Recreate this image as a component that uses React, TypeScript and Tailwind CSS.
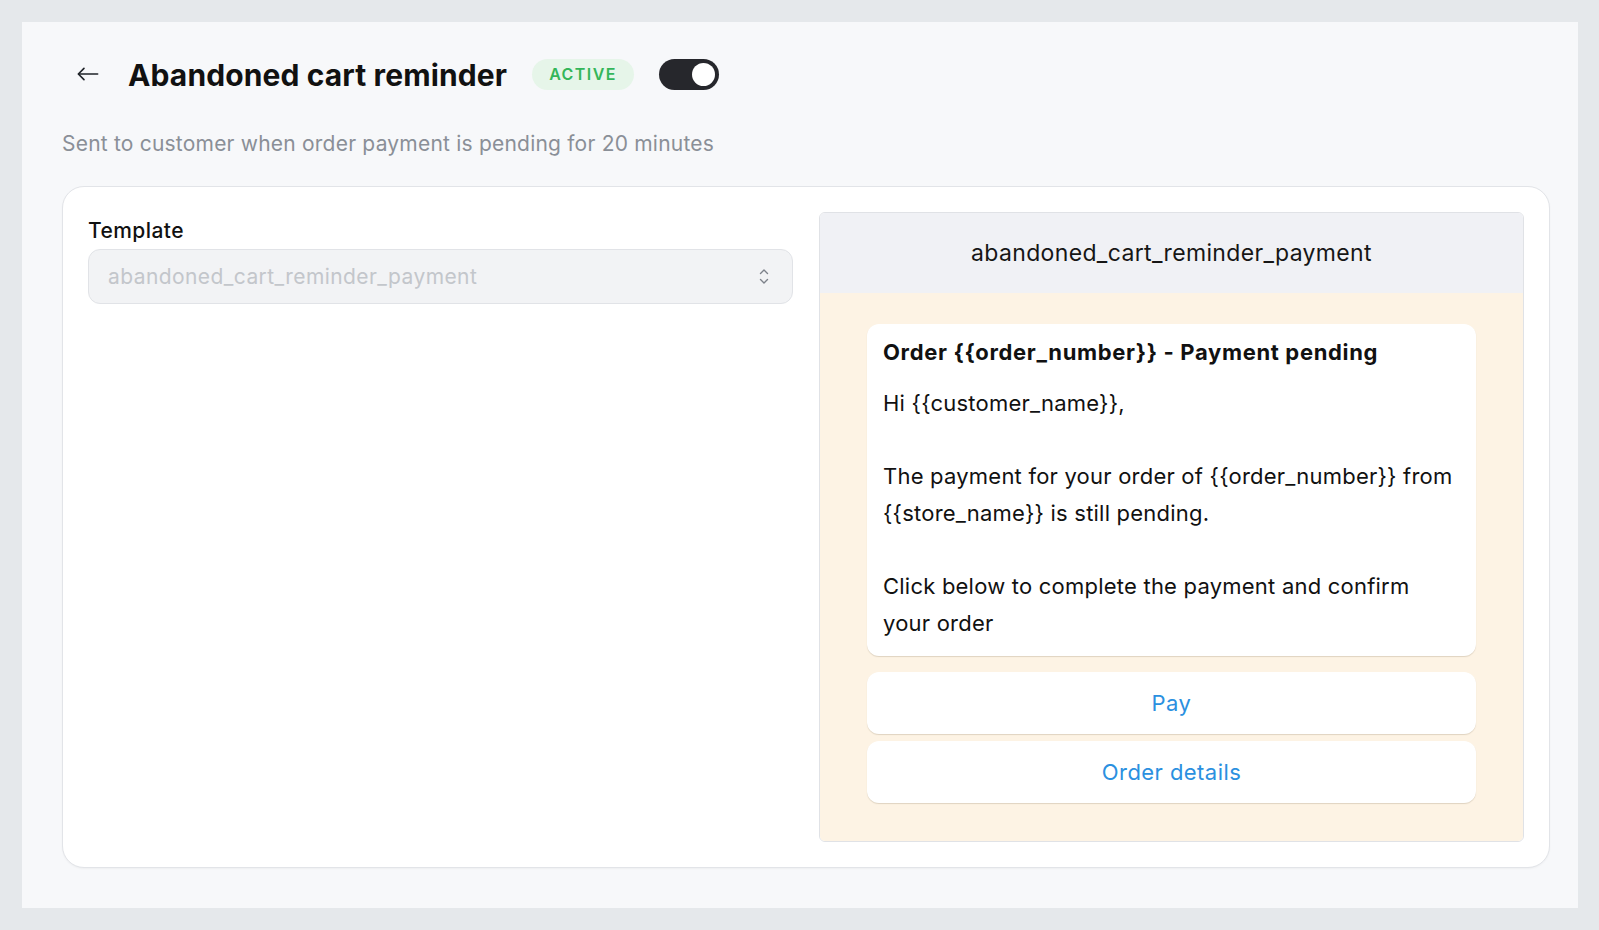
import React from "react";

const font = { fontFamily: "Inter, 'Noto Sans', sans-serif" };

export default function App() {
  return (
    <div className="min-h-screen bg-[#e5e8eb] p-[22px] pr-[21px]" style={font}>
      <div className="bg-[#f7f8fa] pl-10 pr-[28px] pt-[36px] pb-10">
        {/* Header */}
        <div className="flex h-8 items-center">
          <button className="ml-[15px] text-[#1f2328]">
            <svg width="22" height="22" viewBox="0 0 24 24" fill="none" stroke="currentColor" strokeWidth="1.8" strokeLinecap="round" strokeLinejoin="round">
              <path d="M22.5 12H1.8" />
              <path d="M7.6 5.9 1.5 12l6.1 6.1" />
            </svg>
          </button>
          <h1 className="ml-[29px] pt-[2px] text-[30px] font-bold leading-none tracking-[0.004em] text-[#111]">
            Abandoned cart reminder
          </h1>
          <span className="ml-[25px] flex h-[31px] items-center rounded-full bg-[#e6f5e9] px-[17px] text-[16px] font-semibold tracking-[0.09em] text-[#34b65a]">
            ACTIVE
          </span>
          <Toggle />
        </div>

        <p className="mt-10 text-[21px] leading-7 tracking-[0.01em] text-[#8a8f97]">
          Sent to customer when order payment is pending for 20 minutes
        </p>

        {/* Card */}
        <div className="mt-[28px] grid grid-cols-2 gap-[26px] rounded-[22px] border border-[#e2e4e8] bg-white p-[25px] shadow-[0_1px_2px_rgba(0,0,0,0.04)]">
          <div className="pt-[5px]">
            <label className="block text-[21px] font-medium leading-7 tracking-[0.02em] text-[#111]">Template</label>
            <div className="mt-1 flex h-[55px] items-center justify-between rounded-xl border border-[#e1e3e7] bg-[#f2f3f5] pl-[19px] pr-[23px]">
              <span className="text-[21px] tracking-[0.02em] text-[#c3c6cb]">abandoned_cart_reminder_payment</span>
              <svg width="10" height="17" viewBox="0 0 10 17" fill="none" stroke="#7d828a" strokeWidth="1.4" strokeLinecap="round" strokeLinejoin="round">
                <path d="M1.5 5.5 5 2l3.5 3.5" />
                <path d="M1.5 11.5 5 15l3.5-3.5" />
              </svg>
            </div>
          </div>

          <Preview />
        </div>
      </div>
    </div>
  );
}

const Toggle: React.FC = () => (
  <div className="ml-[25px] flex h-[31px] w-[60px] items-center justify-end rounded-full bg-[#26272c] pr-[4px]">
    <div className="h-[23px] w-[23px] rounded-full bg-white" />
  </div>
);

const Preview: React.FC = () => (
  <div className="overflow-hidden rounded-md border border-[#e0e2e6]">
    <div className="flex h-[80px] items-center justify-center bg-[#f0f1f5] text-[23px] tracking-[0.015em] text-[#161616]">
      abandoned_cart_reminder_payment
    </div>
    <div className="bg-[#fdf3e4] px-[47px] pt-[31px] pb-[38px]">
      <div className="rounded-xl bg-white px-4 pt-[14px] pb-[15px] shadow-[0_1px_1px_rgba(120,100,70,0.22)]">
        <p className="text-[22px] font-bold leading-7 tracking-[0.03em] text-[#111]">
          Order {"{{order_number}}"} - Payment pending
        </p>
        <p className="mt-[19px] whitespace-nowrap text-[22px] leading-[36.6px] tracking-[0.01em] text-[#111]">
          Hi {"{{customer_name}}"},
          <br />
          <br />
          The payment for your order of {"{{order_number}}"} from
          <br />
          {"{{store_name}}"} is still pending.
          <br />
          <br />
          Click below to complete the payment and confirm
          <br />
          your order
        </p>
      </div>
      <div className="mt-4 flex flex-col gap-[7px]">
        <ActionButton label="Pay" />
        <ActionButton label="Order details" />
      </div>
    </div>
  </div>
);

const ActionButton: React.FC<{ label: string }> = ({ label }) => (
  <button className="flex h-[62px] items-center justify-center rounded-xl bg-white text-[22px] tracking-[0.02em] text-[#2b90e0] shadow-[0_1px_1px_rgba(120,100,70,0.22)]">
    {label}
  </button>
);
